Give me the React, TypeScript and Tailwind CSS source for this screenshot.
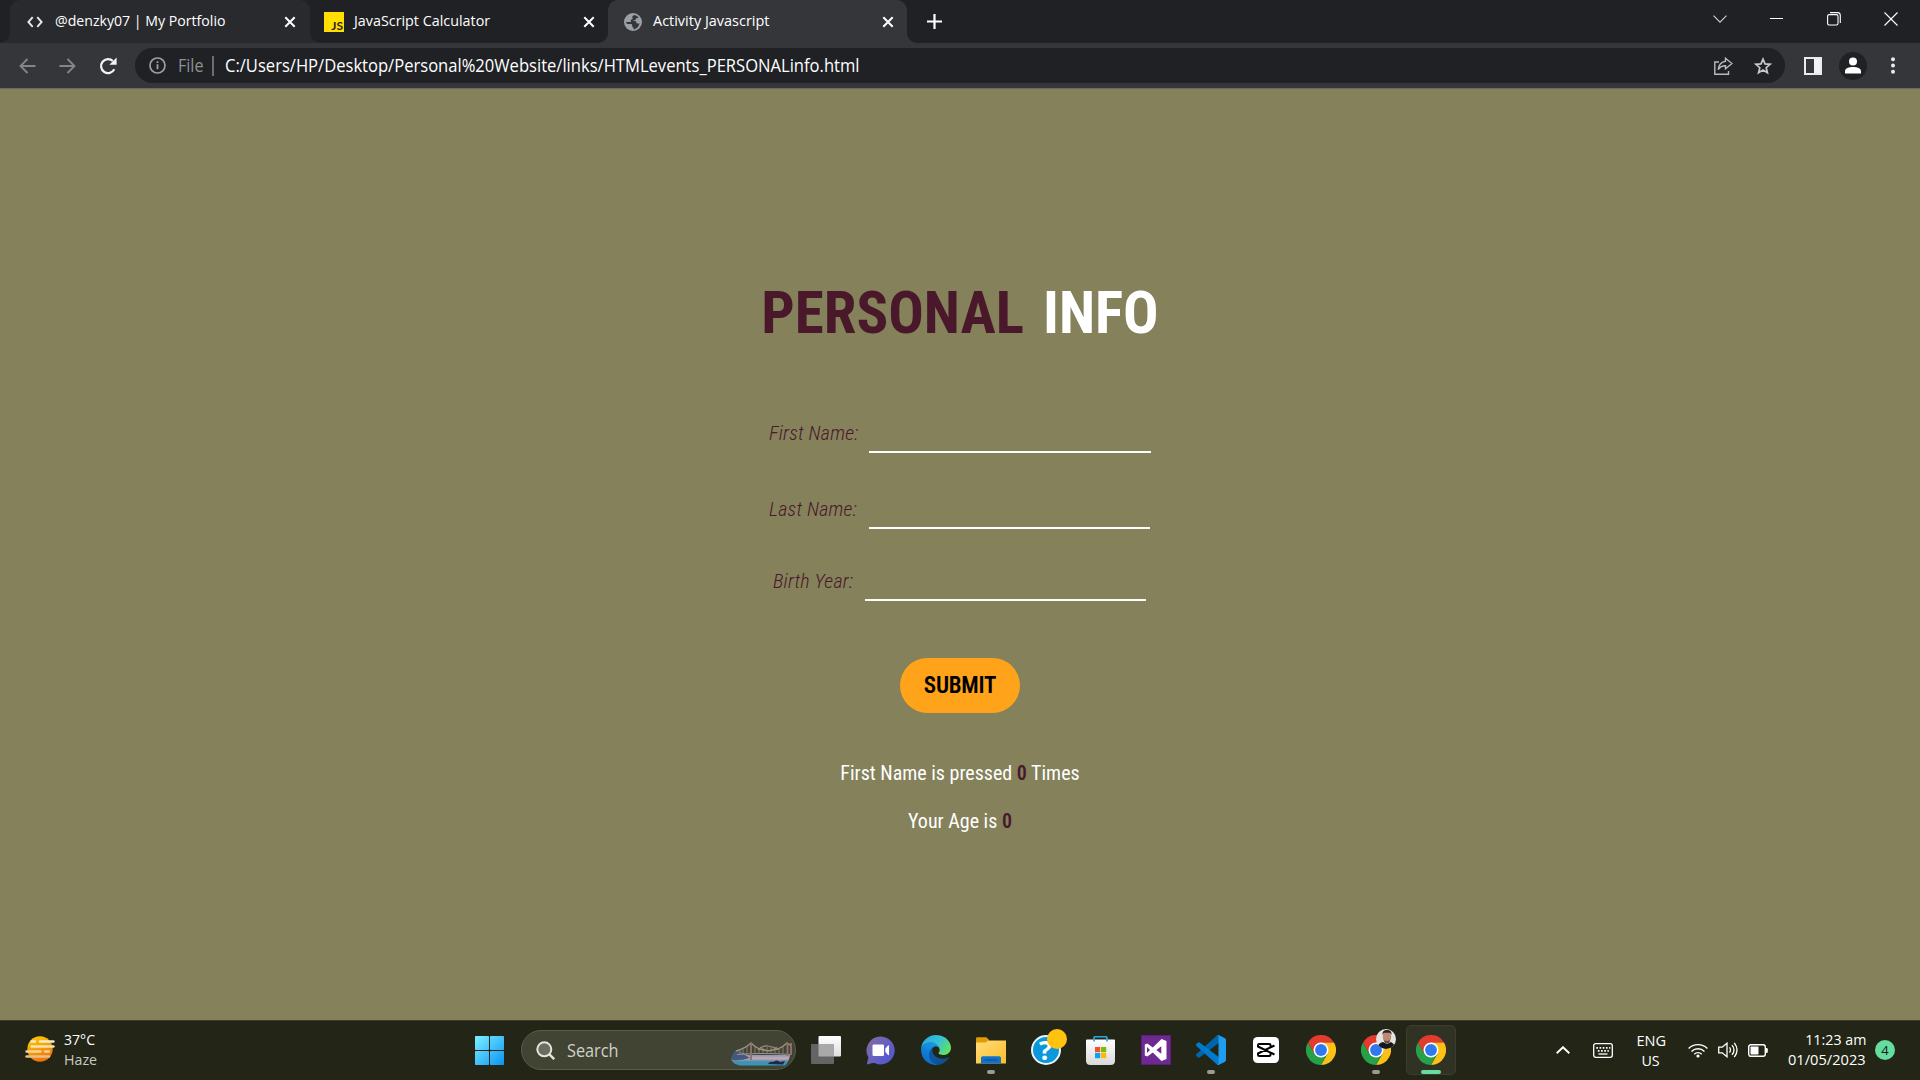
import React from "react";

const UI = "font-['Open_Sans','Noto_Sans',sans-serif]";
const COND = "font-['Roboto_Condensed','Roboto',sans-serif] [font-stretch:condensed]";

/* Slightly narrowed UI label */
function Label({ children, className = "" }: { children: React.ReactNode; className?: string }) {
  return <span className={`inline-block origin-left whitespace-nowrap ${className}`}>{children}</span>;
}

function CloseIcon() {
  return (
    <svg width="12" height="12" viewBox="0 0 12 12" stroke="#fff" strokeWidth="2" fill="none">
      <path d="M1.3 1.3 10.7 10.7M10.7 1.3 1.3 10.7" />
    </svg>
  );
}

function GlobeIcon() {
  return (
    <svg width="18" height="18" viewBox="0 0 18 18">
      <circle cx="9" cy="9" r="9" fill="#9aa0a6" />
      <path
        d="M10.200 1.900c-.9.5-1.900 1-1.900 2.100 0 .9.500 1.100.300 1.800-.300.800-1.700.500-1.900 1.400-.100.700.500 1.100.300 1.700H1.900c.300 1 .800 1.700 1.500 2.100h3.300c1.100 0 1.500.600 1.500 1.400v.8c0 .8.400 1.100 1.200 1.100v1.900c2.200-.200 3.900-1.300 5-3 .500-.800.900-1.700 1.200-2.600h-2.100c-.700 0-1-.500-1.100-1.200-.200-1-.800-1.500-1.800-1.500H9.400V7.300h1.400c.700 0 1-.400 1-1V5.200h1.300c.8 0 1.200-.400 1.300-.9A7.200 7.200 0 0 0 10.200 1.900Z"
        fill="#35363a"
      />
    </svg>
  );
}

function Corner({ side, fill }: { side: "left" | "right"; fill: string }) {
  return (
    <svg width="10" height="10" viewBox="0 0 10 10" className={`absolute bottom-0 ${side === "left" ? "-left-[10px]" : "-right-[10px]"}`}>
      <path d={side === "left" ? "M10 0V10H0A10 10 0 0 0 10 0Z" : "M0 0V10H10A10 10 0 0 1 0 0Z"} fill={fill} />
    </svg>
  );
}

function TabStrip() {
  return (
    <div className="flex h-[43px] bg-[#202124] pl-[10px] text-[15px] text-white">
      <div className="relative flex h-full w-[300px] items-center rounded-t-[10px] bg-[#292a2d] pr-[14px] pl-[17px]">
        <Corner side="left" fill="#292a2d" />
        <Corner side="right" fill="#292a2d" />
        <svg width="16" height="12" viewBox="0 0 16 12" fill="none" stroke="#e8eaed" strokeWidth="1.900">
          <path d="M5.700 1.200 1.400 6l4.300 4.800M10.300 1.200 14.600 6l-4.300 4.800" />
        </svg>
        <Label className="ml-[12px] -translate-y-px scale-x-[.942]">@denzky07 | My Portfolio</Label>
        <span className="ml-auto"><CloseIcon /></span>
      </div>
      <div className="flex h-full w-[298px] items-center pr-[13px] pl-[14px]">
        <div className="flex h-5 w-5 items-end justify-end bg-[#ffde00] pr-px font-['Lato',sans-serif] text-[12px] leading-[13px] font-bold text-[#222]">
          JS
        </div>
        <Label className="ml-[10px] -translate-y-px scale-x-[.955]">JavaScript Calculator</Label>
        <span className="ml-auto"><CloseIcon /></span>
      </div>
      <div className="relative flex h-full w-[299px] items-center rounded-t-[10px] bg-[#35363a] pr-[13px] pl-[16px]">
        <Corner side="left" fill="#35363a" />
        <Corner side="right" fill="#35363a" />
        <GlobeIcon />
        <Label className="ml-[10.5px] -translate-y-px scale-x-[.964]">Activity Javascript</Label>
        <span className="ml-auto"><CloseIcon /></span>
      </div>
      <div className="flex w-[55px] items-center justify-center">
        <svg width="15" height="15" viewBox="0 0 15 15" stroke="#fff" strokeWidth="2.200"><path d="M0 7.500H15M7.500 0V15" /></svg>
      </div>
      <div className="ml-auto flex h-[37px] items-center text-white">
        <div className="flex w-[57px] justify-center">
          <svg width="14" height="8" viewBox="0 0 14 8" fill="none" stroke="#d0d1d3" strokeWidth="1.100"><path d="M.5.7 7 7.200 13.500.7" /></svg>
        </div>
        <div className="flex w-[57px] justify-center"><div className="h-px w-[13px] bg-white" /></div>
        <div className="flex w-[57px] justify-center">
          <svg width="14" height="14" viewBox="0 0 14 14" fill="none" stroke="#fff" strokeWidth="1.100">
            <rect x=".6" y="2.600" width="10.400" height="10.400" rx="1.600" />
            <path d="M3 .6h7.500a2.800 2.800 0 0 1 2.800 2.800V11" />
          </svg>
        </div>
        <div className="flex w-[58px] justify-center">
          <svg width="14" height="14" viewBox="0 0 14 14" stroke="#fff" strokeWidth="1.100"><path d="M.5.5l13 13M13.500.5l-13 13" /></svg>
        </div>
      </div>
    </div>
  );
}

function Toolbar() {
  return (
    <div className="flex h-[46px] items-center border-b border-[#6b6a62] bg-[#35363a] pl-[19px] text-[17.5px]">
      <svg width="17" height="16" viewBox="0 0 17 16" fill="none" stroke="#85868a" strokeWidth="1.800"><path d="M16.500 8H1.500M8.500 1 1.500 8l7 7" /></svg>
      <svg className="ml-[23px]" width="17" height="16" viewBox="0 0 17 16" fill="none" stroke="#85868a" strokeWidth="1.800"><path d="M.5 8h15M8.500 1l7 7-7 7" /></svg>
      <svg className="ml-[22.5px]" width="18" height="18" viewBox="0 0 18 18">
        <path d="M15.300 12.300A7 7 0 1 1 13.900 4" fill="none" stroke="#f1f3f4" strokeWidth="2.200" />
        <path d="M17.600.6v7.200h-7.200Z" fill="#f1f3f4" />
      </svg>
      <div className="ml-[18.5px] flex h-[35px] w-[1650px] items-center rounded-full bg-[#202124] pr-[13px] pl-[14px]">
        <svg width="17" height="17" viewBox="0 0 17 17"><circle cx="8.500" cy="8.500" r="7.500" fill="none" stroke="#9aa0a6" strokeWidth="1.700" /><path d="M7.600 7.300h1.800v5H7.600zM7.600 4.300h1.800v1.800H7.600z" fill="#9aa0a6" /></svg>
        <Label className="ml-[12px] w-[25px] scale-x-[.92] text-[#8d9196]">File</Label>
        <div className="ml-[9px] h-5 w-[2px] bg-[#6b6e73]" />
        <Label className="ml-[11px] scale-x-[.947] text-white">C:/Users/HP/Desktop/Personal%20Website/links/HTMLevents_PERSONALinfo.html</Label>
        <svg className="ml-auto" width="19" height="18" viewBox="0 0 19 18" fill="none" stroke="#b9babc" strokeWidth="1.400">
          <path d="M5 5H.8v12.200h13.700V14" />
          <path d="M11.500 1.200 18 6.500l-6.500 5.200V8.700C8.200 8.700 6 9.800 4.200 12.500 4.800 8 7.200 4.800 11.500 4.200Z" />
        </svg>
        <svg className="ml-[21px]" width="18" height="18" viewBox="0 0 18 18" fill="none" stroke="#c7c8ca" strokeWidth="1.700">
          <path d="M9 2.200 11 6.900l5.100.4-3.900 3.400 1.200 5L9 13l-4.400 2.700 1.200-5L1.900 7.300 7 6.900Z" />
        </svg>
      </div>
      <div className="ml-[18.5px] flex h-[18px] w-[18px] border-2 border-[#e9eaee] bg-[#35363a]"><div className="ml-auto h-full w-[6px] bg-[#f1f3f8]" /></div>
      <div className="ml-[17.5px] flex h-7 w-7 items-center justify-center rounded-full bg-[#202124]">
        <svg width="16" height="17" viewBox="0 0 16 17" fill="#fff"><circle cx="8" cy="4.500" r="4" /><path d="M0 16.500v-2.300C0 11.300 4 10 8 10s8 1.300 8 4.200v2.300Z" /></svg>
      </div>
      <svg className="ml-[23.5px]" width="4" height="17" viewBox="0 0 4 17" fill="#e8eaed"><circle cx="2" cy="2.200" r="2" /><circle cx="2" cy="8.500" r="2" /><circle cx="2" cy="14.800" r="2" /></svg>
    </div>
  );
}

const LABEL = "font-[350] tracking-[.22px] whitespace-nowrap text-[#4a182b] italic";
const FIELD = "h-[38px] border-b-2 border-white bg-transparent outline-none";

function Page() {
  return (
    <main className={`flex h-[931px] flex-col items-center bg-[#84815b] pt-[189px] text-white ${COND}`}>
      <h1 className="flex h-[70px] gap-[19px] text-[59px] leading-[70px] font-bold whitespace-nowrap">
        <span className="text-[#4a182b]">PERSONAL</span>
        <span>INFO</span>
      </h1>
      <div className="mt-[67px] flex h-[38px] text-[20px] leading-9">
        <label className={`w-[100px] ${LABEL}`}>First Name:</label>
        <input className={`w-[282px] ${FIELD}`} />
      </div>
      <div className="mt-[38px] mr-px flex h-[38px] text-[20px] leading-9">
        <label className={`w-[100px] ${LABEL}`}>Last Name:</label>
        <input className={`w-[281px] ${FIELD}`} />
      </div>
      <div className="mt-[34px] mr-px flex h-[38px] text-[20px] leading-9">
        <label className={`w-[92px] ${LABEL}`}>Birth Year:</label>
        <input className={`w-[281px] ${FIELD}`} />
      </div>
      <button className="mt-[57px] h-[55px] w-[120px] rounded-full bg-[#ffa31a] pt-px text-[23px] font-semibold tracking-[-.25px] text-black">SUBMIT</button>
      <p className="mt-[48px] h-6 text-[20px] leading-6">First Name is pressed <b className="font-semibold text-[#4a182b]">0</b> Times</p>
      <p className="mt-[24px] h-6 text-[20px] leading-6">Your Age is <b className="font-semibold text-[#4a182b]">0</b></p>
    </main>
  );
}

function Chrome() {
  return (
    <svg width="30" height="30" viewBox="0 0 48 48">
      <path d="M24 12H44.800A24 24 0 0 1 24 48L34.400 30Z" fill="#fbc116" />
      <path d="M13.600 30 3.200 12A24 24 0 0 0 24 48L34.400 30Z" fill="#27a148" />
      <path d="M24 12H44.800L34.400 30 24 24Z" fill="#fbc116" />
      <path d="M3.200 12 13.600 30 24 24 24 12H44.800A24 24 0 0 0 3.200 12Z" fill="#e33b2e" />
      <circle cx="24" cy="24" r="12" fill="#fff" />
      <circle cx="24" cy="24" r="9.500" fill="#2f78ee" />
    </svg>
  );
}

function Cell({ children, run }: { children: React.ReactNode; run?: boolean }) {
  return (
    <div className="relative flex h-[60px] w-[55px] items-center justify-center">
      {children}
      {run && <div className="absolute bottom-[6px] left-[24px] h-1 w-2 rounded-full bg-[#9a9b92]" />}
    </div>
  );
}

function WindowsLogo() {
  return (
    <svg width="29" height="29" viewBox="0 0 29 29">
      <defs><linearGradient id="win" gradientUnits="userSpaceOnUse" x1="0" y1="0" x2="29" y2="29"><stop stopColor="#7df0ff" /><stop offset="1" stopColor="#0a93f5" /></linearGradient></defs>
      <g fill="url(#win)"><rect width="14" height="14" rx=".7" /><rect x="15" width="14" height="14" rx=".7" /><rect y="15" width="14" height="14" rx=".7" /><rect x="15" y="15" width="14" height="14" rx=".7" /></g>
    </svg>
  );
}

function BridgeArt() {
  return (
    <svg width="61" height="25" viewBox="0 0 61 25">
      <defs>
        <linearGradient id="water" x1="0" y1="0" x2="0" y2="1"><stop stopColor="#3d5f96" /><stop offset=".3" stopColor="#7f95cb" /><stop offset=".55" stopColor="#c7a9a8" /><stop offset=".75" stopColor="#4a8db5" /><stop offset="1" stopColor="#2b9cb9" /></linearGradient>
      </defs>
      <path d="M1 15Q3 11 5 8l12 5h42Q58 20 54 23.500H9Q2 22 .5 18Z" fill="url(#water)" />
      <path d="M1 14Q3 10 5 8l14 8Q9 19 1 18Z" fill="#44577d" />
      <path d="M37 22q2-3 5-2 4-3 7 0l5-1-2 3.500Z" fill="#23254a" />
      <g fill="none" stroke="#a08f86">
        <path d="M5 9Q15 6 20 1q6 6 12 7 3 .6 6 .6Q49 8 56 1q2 2 4 2" strokeWidth="1.400" />
        <path d="M6 12.500Q32 10.500 60 12.500M27 8q5-5 10-4 7 1 10 4" strokeWidth="1.200" />
        <path d="M29 5q4 4 8 4t9-4" strokeWidth=".9" />
      </g>
      <path d="M20 1v17M56.500 1v13M60 1v12" stroke="#8b7369" strokeWidth="1.900" />
      <path d="M9 8v4M12 7v5M16 5v7M24 5v7M28 8v4M32 6v6M36 5v7M40 5v7M44 7v5M48 7v5M52 5v7" stroke="#958981" strokeWidth=".8" />
    </svg>
  );
}

function ChatIcon() {
  return (
    <svg width="29" height="29" viewBox="0 0 29 29">
      <defs><linearGradient id="chat" x1="0" y1="0" x2="1" y2=".8"><stop stopColor="#8a6a9c" /><stop offset=".5" stopColor="#6a62bd" /><stop offset="1" stopColor="#5156cf" /></linearGradient></defs>
      <path d="M14.800.5A14 14 0 1 1 8 26.800L.7 28.500 2.400 21.500A14 14 0 0 1 14.800.5Z" fill="url(#chat)" />
      <rect x="6.500" y="8.500" width="11.500" height="11.500" rx="1.300" fill="#fff" />
      <path d="M19.300 12.700 22 9.500q1-.6 1 .5v8.500q0 1.100-1 .5l-2.700-3.200Z" fill="#fff" />
    </svg>
  );
}

function EdgeIcon() {
  return (
    <svg width="30" height="30" viewBox="0 0 256 256">
      <defs>
        <linearGradient id="e1" x1="0" y1="0" x2="1" y2="0"><stop stopColor="#0c59a4" /><stop offset="1" stopColor="#114a8b" /></linearGradient>
        <linearGradient id="e2" x1=".6" y1="0" x2=".2" y2="1"><stop stopColor="#1b9de2" /><stop offset=".5" stopColor="#0f7fd6" /><stop offset="1" stopColor="#0a66c2" /></linearGradient>
        <linearGradient id="e3" x1="0" y1=".2" x2="1" y2=".7"><stop stopColor="#2aa9dc" /><stop offset=".5" stopColor="#35c1d8" /><stop offset="1" stopColor="#66e35a" /></linearGradient>
      </defs>
      <path d="M231 190.500c-3.400 1.800-6.900 3.400-10.500 4.700-11.500 4.300-23.600 6.500-35.900 6.500-47.300 0-88.500-32.500-88.500-74.300 0-11.400 6.400-21.900 16.400-27.300-42.800 1.800-53.800 46.400-53.800 72.500 0 73.900 68.100 81.400 82.800 81.400 7.900 0 19.800-2.300 27-4.600l1.300-.4a128.300 128.300 0 0 0 66.600-52.800 4 4 0 0 0-5.400-5.700Z" fill="url(#e1)" />
      <path d="M105.700 241.400a79.200 79.200 0 0 1-22.700-21.300 80.700 80.700 0 0 1 29.500-120c3.100-1.500 8.500-4.100 15.600-4a32.400 32.400 0 0 1 25.700 13 31.900 31.900 0 0 1 6.300 18.700c0-.2 24.500-79.600-80-79.600-43.900 0-80 41.700-80 78.200a130 130 0 0 0 12.100 56 128 128 0 0 0 156.400 67 75.600 75.600 0 0 1-62.900-8Z" fill="url(#e2)" />
      <path d="M152.300 148.900c-.8 1-3.300 2.500-3.300 5.700 0 2.600 1.700 5.100 4.700 7.200 14.400 10 41.500 8.700 41.600 8.700a59.600 59.600 0 0 0 30.300-8.300 61.400 61.400 0 0 0 30.400-52.900c.3-22.400-8-37.300-11.300-43.900C223.500 23.900 177.700 0 128 0A128 128 0 0 0 0 126.200c.5-36.500 36.800-66 80-66 3.500 0 23.500.3 42 10a72.600 72.600 0 0 1 30.900 29.300c6.100 10.600 7.200 24.100 7.200 29.500s-2.700 13.300-7.800 19.900Z" fill="url(#e3)" />
    </svg>
  );
}

function FolderIcon() {
  return (
    <svg width="30" height="27" viewBox="0 0 30 27">
      <defs><linearGradient id="fold" x1="0" y1="0" x2="1" y2="1"><stop stopColor="#ffdc7a" /><stop offset="1" stopColor="#fcbf28" /></linearGradient></defs>
      <path d="M0 1.500Q0 .3 1.200.3h8.500q.8 0 1.300.5L13 3v6H0Z" fill="#e09c07" />
      <path d="M0 5.500h9.500l3-2H30v23H0Z" fill="url(#fold)" />
      <path d="M5 26.500V21q0-1.800 1.800-1.800h16.400q1.800 0 1.800 1.800v5.500Z" fill="#1272c9" />
      <path d="M8.500 23h13" stroke="#0b4f98" strokeWidth="1.200" />
    </svg>
  );
}

function HelpIcon() {
  return (
    <div className="relative flex h-[30px] w-[30px] items-center justify-center rounded-full border-2 border-[#e9f3f8] bg-[#0a97dc] font-['Open_Sans',sans-serif] text-[27px] leading-none font-bold text-white">
      <span className="-translate-y-px">?</span>
      <div className="absolute -top-[8px] left-[14px] h-5 w-5 rounded-full bg-[#ffc20e]" />
    </div>
  );
}

function StoreIcon() {
  return (
    <svg width="29" height="29" viewBox="0 0 29 29">
      <defs><linearGradient id="store" x1="0" y1="0" x2="0" y2="1"><stop stopColor="#fff" /><stop offset="1" stopColor="#d9d9d9" /></linearGradient></defs>
      <path d="M0 4.500q0-1 1-1h27q1 0 1 1v20q0 4.500-4.500 4.500h-20Q0 29 0 24.500Z" fill="url(#store)" />
      <path d="M8 5.500V2q0-1.300 1.300-1.300h10.400Q21 .7 21 2v3.500" fill="none" stroke="#27a9e6" strokeWidth="1.700" />
      <rect x="9" y="11" width="5.200" height="5.200" fill="#f05325" /><rect x="15" y="11" width="5.200" height="5.200" fill="#80bb03" />
      <rect x="9" y="17" width="5.200" height="5.200" fill="#06a5f0" /><rect x="15" y="17" width="5.200" height="5.200" fill="#ffba08" />
    </svg>
  );
}

function VisualStudioIcon() {
  return (
    <svg width="30" height="30" viewBox="0 0 30 30">
      <rect x=".5" y=".5" width="29" height="29" fill="#6f2992" stroke="#5b1f7a" />
      <path fillRule="evenodd" d="M20.500 4 25.500 6V24l-5 2-8.700-8.400L6.400 21.600 3.800 20.400V9.600L6.400 8.400l5.400 4Zm-.2 7.200L15.400 15l4.900 3.800ZM6 12v6l3-3Z" fill="#fff" />
    </svg>
  );
}

function VSCodeIcon() {
  return (
    <svg width="30" height="30" viewBox="0 0 100 100">
      <path d="M96.500 10.800 75.900.9a6.200 6.200 0 0 0-7.100 1.200L1.300 63.600a4.200 4.200 0 0 0 0 6.200l5.500 5a4.200 4.200 0 0 0 5.300.2L93.400 13.400c2.700-2.100 6.600-.1 6.600 3.300v-.3a6.200 6.200 0 0 0-3.500-5.600Z" fill="#0065a9" />
      <path d="m96.500 89.200-20.600 9.900a6.200 6.200 0 0 1-7.100-1.200L1.300 36.400a4.200 4.200 0 0 1 0-6.200l5.500-5a4.200 4.200 0 0 1 5.300-.2l81.300 61.600c2.700 2.100 6.600.1 6.600-3.300v.3a6.200 6.200 0 0 1-3.500 5.600Z" fill="#007acc" />
      <path d="M75.900 99.100a6.200 6.200 0 0 1-7.100-1.200c2.300 2.300 6.200.7 6.200-2.600V4.700c0-3.300-3.900-4.900-6.200-2.600a6.200 6.200 0 0 1 7.100-1.200l20.600 9.900a6.200 6.200 0 0 1 3.500 5.600v67.200a6.200 6.200 0 0 1-3.500 5.600Z" fill="#1f9cf0" />
    </svg>
  );
}

function CapCutIcon() {
  return (
    <svg width="26" height="26" viewBox="0 0 26 26">
      <rect width="26" height="26" rx="4.500" fill="#fff" />
      <path d="M17.500 9.500V8.300q0-1.300-1.300-1.300H6.300Q5 7 5 8.300v1.200L21.500 17.500M17.500 16.500v1.200q0 1.300-1.300 1.300H6.300Q5 19 5 17.700v-1.200L21.500 8.500" fill="none" stroke="#000" strokeWidth="2" />
    </svg>
  );
}

function HazeIcon() {
  return (
    <svg width="30" height="26" viewBox="0 0 30 26">
      <defs><linearGradient id="sun" x1=".3" y1="0" x2=".7" y2="1"><stop stopColor="#ffc800" /><stop offset="1" stopColor="#ee6a10" /></linearGradient></defs>
      <circle cx="15" cy="13" r="12.700" fill="url(#sun)" />
      <g strokeWidth="2.400" strokeLinecap="round" fill="none">
        <path d="M6.500 5.500h3.500M15 5.500h13.500" stroke="#f8ecc8" /><path d="M6.500 10.500h22" stroke="#f5e3b5" />
        <path d="M1.500 15.500h14M20 15.500h4" stroke="#f0d49a" /><path d="M1.500 20.500h22.500" stroke="#e6c184" />
      </g>
    </svg>
  );
}

function Taskbar() {
  return (
    <footer className="flex h-[60px] items-center border-t border-[#3b3d2a] bg-[#232516] pb-px text-[15px] text-white">
      <div className="flex w-[462px] items-center pl-[25px]">
        <span className="-mt-[3px]"><HazeIcon /></span>
        <div className="-mt-[3px] ml-[9px] flex flex-col items-start leading-5">
          <Label className="scale-x-[.94]">37°C</Label>
          <Label className="scale-x-[.95] text-[#c9c9c4]">Haze</Label>
        </div>
      </div>
      <Cell><WindowsLogo /></Cell>
      <div className="ml-[4px] flex h-10 w-[275px] items-center rounded-full border border-[#5a5c49] bg-[#414433] pl-[14px] text-[17.5px] text-[#d0d1cb]">
        <svg width="19" height="19" viewBox="0 0 19 19" fill="none" stroke="#e4e5e0" strokeWidth="2"><circle cx="8.300" cy="8.300" r="7" fill="#6b6d5f" /><path d="m13.200 13.200 5 5" strokeWidth="2.400" /></svg>
        <Label className="ml-[12px] scale-x-[.93]">Search</Label>
        <span className="mt-[9px] mr-[3px] ml-auto"><BridgeArt /></span>
      </div>
      <div className="ml-[2px] flex">
        <Cell>
          <svg width="30" height="28" viewBox="0 0 30 28">
            <defs><linearGradient id="tv" x1="0" y1="0" x2="0" y2="1"><stop stopColor="#fff" /><stop offset="1" stopColor="#dedede" /></linearGradient></defs>
            <rect x="7.500" width="22.500" height="20.500" rx="1" fill="url(#tv)" />
            <rect y="8" width="23" height="20" rx="1" fill="#646464" />
            <path d="M7.500 8H23v12.500H7.500Z" fill="#a9a9a9" />
          </svg>
        </Cell>
        <Cell><ChatIcon /></Cell>
        <Cell><EdgeIcon /></Cell>
        <Cell run><FolderIcon /></Cell>
        <Cell><HelpIcon /></Cell>
        <Cell><StoreIcon /></Cell>
        <Cell><VisualStudioIcon /></Cell>
        <Cell run><VSCodeIcon /></Cell>
        <Cell><CapCutIcon /></Cell>
        <Cell><Chrome /></Cell>
        <Cell run>
          <Chrome />
          <svg className="absolute top-[9px] left-[28px]" width="20" height="20" viewBox="0 0 20 20">
            <defs><clipPath id="av"><circle cx="10" cy="10" r="10" /></clipPath></defs>
            <g clipPath="url(#av)">
              <rect width="20" height="20" fill="#e4e3e2" />
              <path d="M1 20q1-6 6-7l4 2 4-2q4 2 4 7Z" fill="#17181c" />
              <ellipse cx="11" cy="8" rx="4.200" ry="6" fill="#b98a74" />
              <path d="M6.500 6Q6 1 11 1t4.500 5L14 3.800H8Z" fill="#2a211f" />
              <path d="M8 11q3 2 6 0l-1 3.500h-4Z" fill="#6b4b40" />
            </g>
          </svg>
        </Cell>
        <div className="relative mt-[5px] ml-[3px] flex h-[50px] w-[50px] items-center justify-center rounded-[5px] border border-[#3b3d2f] bg-[#303224]">
          <Chrome />
          <div className="absolute bottom-0 left-[14px] h-1 w-5 rounded-full bg-[#65dd9f]" />
        </div>
      </div>
      <div className="ml-auto flex items-center">
        <svg width="14" height="8" viewBox="0 0 14 8" fill="none" stroke="#fff" strokeWidth="1.900"><path d="M.7 7.200 7 1.200l6.300 6" /></svg>
        <svg className="ml-[23px]" width="20" height="15" viewBox="0 0 20 15">
          <rect x=".7" y=".7" width="18.600" height="13.600" rx="2" fill="none" stroke="#fff" strokeWidth="1.300" />
          <path d="M3.300 4.800h14M4.800 7.800h11" stroke="#fff" strokeWidth="1.700" strokeDasharray="1.700 1.500" />
          <path d="M5.500 11h9" stroke="#fff" strokeWidth="1.300" />
        </svg>
        <div className="-mt-[1px] ml-[22.5px] flex w-[31px] flex-col items-center leading-5">
          <span className="scale-x-[.97]">ENG</span>
          <span className="scale-x-[.95]">US</span>
        </div>
        <svg className="ml-[21.5px]" width="20" height="15" viewBox="0 0 20 15" fill="none" stroke="#fff" strokeWidth="1.400">
          <path d="M.6 5.500a13.300 13.300 0 0 1 18.800 0M3.500 8.400a9.200 9.200 0 0 1 13 0M6.300 11.200a5.200 5.200 0 0 1 7.400 0" />
          <circle cx="10" cy="13" r="1.600" fill="#fff" stroke="none" />
        </svg>
        <svg className="ml-[10px]" width="20" height="16" viewBox="0 0 20 16" fill="none" stroke="#fff" strokeWidth="1.300">
          <path d="M.7 5.200h3.500L9 1.200v13.600l-4.800-4H.7Z" /><path d="M11.500 5.400q2 2.600 0 5.200M14 3.100q4 4.900 0 9.800M16.300.8q5.500 7.200 0 14.400" />
        </svg>
        <svg className="ml-[10px]" width="20" height="13" viewBox="0 0 20 13">
          <rect x=".7" y=".7" width="16.600" height="11.600" rx="2.200" fill="none" stroke="#fff" strokeWidth="1.400" /><rect x="2.500" y="2.500" width="8" height="8" rx=".8" fill="#fff" /><path d="M17.500 4h1q1.300 0 1.300 1.200v2.600q0 1.200-1.300 1.200h-1Z" fill="#fff" />
        </svg>
        <div className="-mt-[3px] flex w-[98px] flex-col items-end leading-5">
          <span className="origin-right scale-x-[.95] whitespace-nowrap">11:23 am</span>
          <span className="origin-right scale-x-[.975] whitespace-nowrap">01/05/2023</span>
        </div>
        <div className="mr-[25px] ml-[9px] flex h-5 w-5 items-center justify-center rounded-full bg-[#65dd9f] text-[13px] leading-none text-[#14201a]">4</div>
      </div>
    </footer>
  );
}

export default function App() {
  return (
    <div className={`flex h-[1080px] w-[1920px] flex-col overflow-hidden ${UI}`}>
      <TabStrip />
      <Toolbar />
      <Page />
      <Taskbar />
    </div>
  );
}
